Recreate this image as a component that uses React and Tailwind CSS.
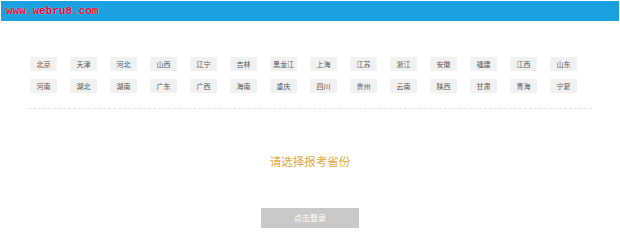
import React from 'react'

const PROVINCES = [
  '北京', '天津', '河北', '山西', '辽宁', '吉林', '黑龙江', '上海', '江苏', '浙江', '安徽', '福建', '江西', '山东',
  '河南', '湖北', '湖南', '广东', '广西', '海南', '重庆', '四川', '贵州', '云南', '陕西', '甘肃', '青海', '宁夏',
]

const cjk = { fontFamily: '"Noto Sans CJK SC", "Noto Sans", sans-serif' }

export default function App() {
  return (
    <div className="w-[620px] h-[252px] bg-white pt-px" style={cjk}>
      {/* top bar */}
      <div className="mx-px h-[20px] bg-[#1ba1e0] flex items-center pl-[5px]">
        <span
          className="text-[11px] font-bold text-[#d8002a] leading-none [text-shadow:0_0_1px_#fff]"
          style={{ fontFamily: '"Liberation Mono", monospace' }}
        >
          www.webru8.com
        </span>
      </div>

      {/* province list */}
      <div className="mt-[36px] pl-[30px] w-[600px] flex flex-wrap gap-x-[13px] gap-y-[8px]">
        {PROVINCES.map(p => (
          <span
            key={p}
            className="w-[27px] h-[14px] bg-[#f1f1f1] text-[#555] text-[7px] leading-[14px] text-center whitespace-nowrap"
          >
            {p}
          </span>
        ))}
      </div>

      <div className="mt-[15px] mx-[28px] border-t border-dashed border-[#e4e4e4]" />

      <div className="mt-[45px] text-center text-[11.5px] leading-[14px] text-[#e3a73f]">
        请选择报考省份
      </div>

      <div className="mt-[40px] flex justify-center">
        <button className="w-[98px] h-[20px] bg-[#c9c9c9] text-white text-[8px] leading-[20px]">
          点击登录
        </button>
      </div>
    </div>
  )
}
